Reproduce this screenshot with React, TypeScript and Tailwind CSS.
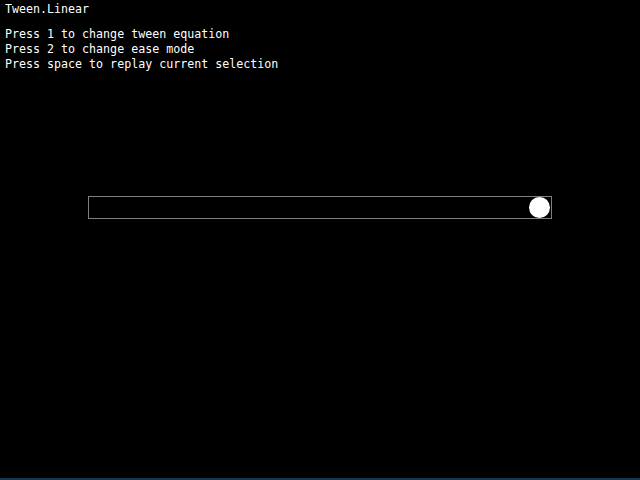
export default function App() {
  return (
    <div className="relative flex h-[480px] w-[640px] flex-col bg-black text-white font-['DejaVu_Sans_Mono','Liberation_Mono',monospace] text-[11.65px] leading-[15px]">
      <div className="pl-[5px] pt-[2px]">
        <div>Tween.Linear</div>
        <div className="mt-[10px]">
          <div>Press 1 to change tween equation</div>
          <div>Press 2 to change ease mode</div>
          <div>Press space to replay current selection</div>
        </div>
      </div>
      <div className="ml-[88px] mt-[124px] flex h-[23px] w-[464px] items-center justify-end border border-[#808080] bg-black pr-[1px]">
        <div className="h-[21px] w-[21px] rounded-full bg-white" />
      </div>
      <div className="mt-auto h-[2px] bg-[#17354f]" />
    </div>
  )
}
